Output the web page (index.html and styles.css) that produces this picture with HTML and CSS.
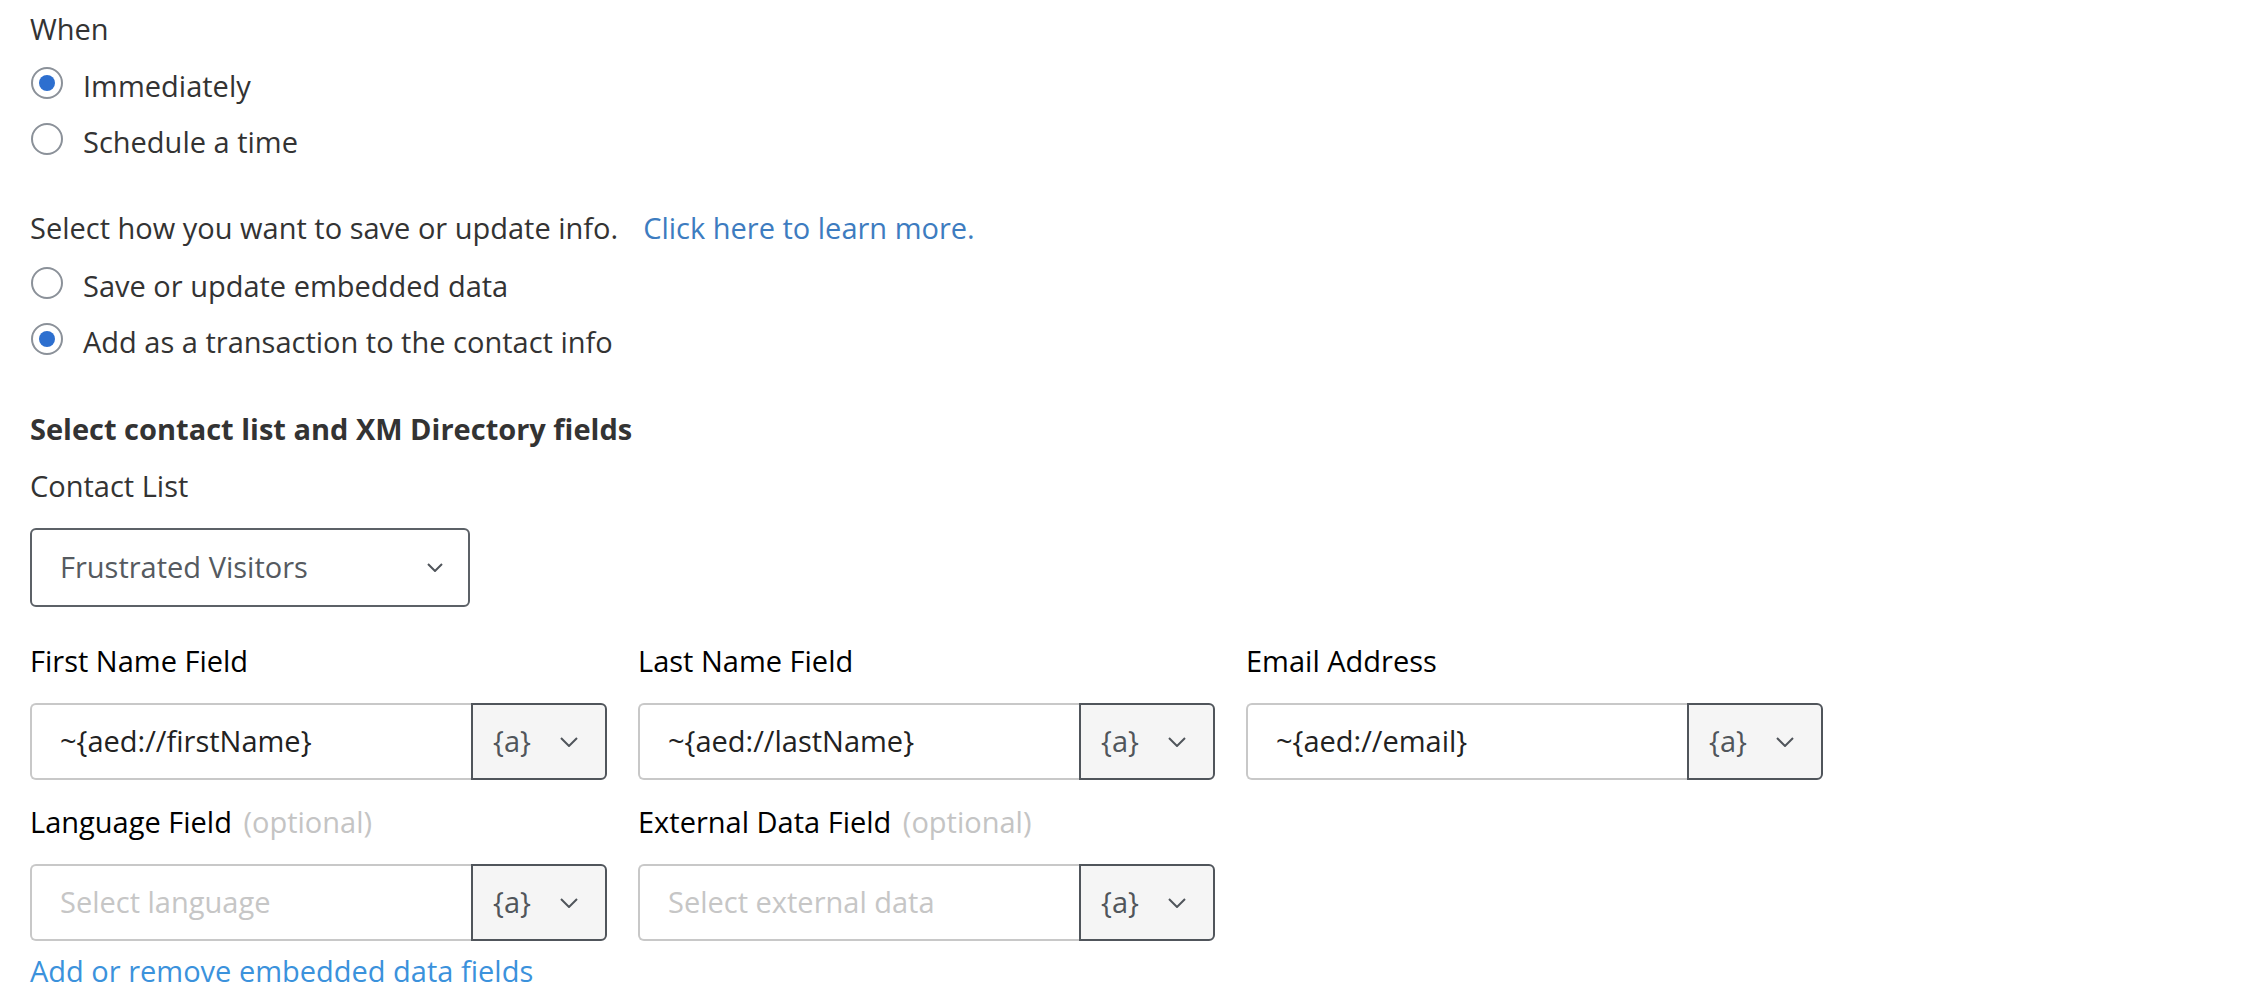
FILE: index.html
```html
<!DOCTYPE html>
<html lang="en">
<head>
  <meta charset="UTF-8">
  <meta name="viewport" content="width=device-width, initial-scale=1.0">
  <title>Save or Update Info</title>
  <link rel="stylesheet" href="styles.css">
</head>
<body>
  <div class="panel">
    <!-- When to run -->
    <div class="label">When</div>
    <div class="radio-group">
      <label class="radio-row"><span class="radio checked"></span>Immediately</label>
      <label class="radio-row"><span class="radio"></span>Schedule a time</label>
    </div>

    <!-- How to save -->
    <div class="label info">Select how you want to save or update info.<a href="#" class="learn-link">Click here to learn more.</a></div>
    <div class="radio-group">
      <label class="radio-row"><span class="radio"></span>Save or update embedded data</label>
      <label class="radio-row"><span class="radio checked"></span>Add as a transaction to the contact info</label>
    </div>

    <!-- Contact list -->
    <div class="label heading">Select contact list and XM Directory fields</div>
    <div class="label sub-label">Contact List</div>
    <div class="select">
      <span>Frustrated Visitors</span>
      <svg class="chevron small" viewBox="0 0 16 9"><polyline points="1,1 8,8 15,1"/></svg>
    </div>

    <!-- Field mapping -->
    <div class="fields">
      <div class="field">
        <div class="label">First Name Field</div>
        <div class="control">
          <div class="control-input">~{aed://firstName}</div>
          <div class="control-btn"><span>{a}</span><svg class="chevron" viewBox="0 0 18 10"><polyline points="1,1 9,9 17,1"/></svg></div>
        </div>
      </div>
      <div class="field">
        <div class="label">Last Name Field</div>
        <div class="control">
          <div class="control-input">~{aed://lastName}</div>
          <div class="control-btn"><span>{a}</span><svg class="chevron" viewBox="0 0 18 10"><polyline points="1,1 9,9 17,1"/></svg></div>
        </div>
      </div>
      <div class="field">
        <div class="label">Email Address</div>
        <div class="control">
          <div class="control-input">~{aed://email}</div>
          <div class="control-btn"><span>{a}</span><svg class="chevron" viewBox="0 0 18 10"><polyline points="1,1 9,9 17,1"/></svg></div>
        </div>
      </div>
      <div class="field">
        <div class="label">Language Field <span class="optional">(optional)</span></div>
        <div class="control">
          <div class="control-input placeholder">Select language</div>
          <div class="control-btn"><span>{a}</span><svg class="chevron" viewBox="0 0 18 10"><polyline points="1,1 9,9 17,1"/></svg></div>
        </div>
      </div>
      <div class="field">
        <div class="label">External Data Field <span class="optional">(optional)</span></div>
        <div class="control">
          <div class="control-input placeholder">Select external data</div>
          <div class="control-btn"><span>{a}</span><svg class="chevron" viewBox="0 0 18 10"><polyline points="1,1 9,9 17,1"/></svg></div>
        </div>
      </div>
    </div>

    <a href="#" class="label embed-link">Add or remove embedded data fields</a>
  </div>
</body>
</html>
```

FILE: styles.css
```css
* {
  margin: 0;
  padding: 0;
  box-sizing: border-box;
}

body {
  font-family: "Open Sans", "Liberation Sans", sans-serif;
  font-size: 29px;
  color: #333;
  background: #fff;
}

.panel {
  padding: 9px 30px 0;
}

.label {
  line-height: 40px;
}

/* Radio buttons */
.radio-group {
  margin-top: 8px;
}

.radio-row {
  display: flex;
  align-items: center;
  height: 56px;
}

.radio {
  width: 32px;
  height: 32px;
  margin: -4px 20px 0 1px;
  border: 2px solid #8b9199;
  border-radius: 50%;
  display: flex;
  align-items: center;
  justify-content: center;
  flex-shrink: 0;
}

.radio.checked::after {
  content: '';
  width: 16px;
  height: 16px;
  border-radius: 50%;
  background: #2d6fcf;
}

.info {
  margin-top: 39px;
}

.learn-link {
  margin-left: 25px;
  color: #3d7cc0;
  text-decoration: none;
}

.info + .radio-group {
  margin-top: 9px;
}

.heading {
  margin-top: 40px;
  font-weight: 700;
}

.sub-label {
  margin-top: 17px;
}

/* Contact list dropdown */
.select {
  margin-top: 22px;
  width: 440px;
  height: 79px;
  padding: 0 25px 3px 28px;
  border: 2px solid #5c6167;
  border-radius: 6px;
  display: flex;
  align-items: center;
  justify-content: space-between;
  color: #555a60;
}

.chevron {
  width: 18px;
  height: 10px;
  fill: none;
  stroke: #50555b;
  stroke-width: 2;
}

.chevron.small {
  width: 16px;
  height: 9px;
  margin-top: 3px;
}

/* Field grid */
.fields {
  margin-top: 34px;
  display: grid;
  grid-template-columns: repeat(3, 577px);
  column-gap: 31px;
  row-gap: 22px;
}

.field .label {
  color: #000;
}

.optional {
  margin-left: 4px;
  color: #c4c4c4;
}

.control {
  margin-top: 22px;
  height: 77px;
  display: flex;
}

.control-input {
  flex: 1;
  padding: 0 0 3px 28px;
  border: 2px solid #c8c8c8;
  border-right: none;
  border-radius: 6px 0 0 6px;
  display: flex;
  align-items: center;
  color: #222;
}

.control-input.placeholder {
  color: #c6c6c6;
}

.control-btn {
  width: 136px;
  padding: 0 27px 2px 20px;
  background: #f5f5f5;
  border: 2px solid #50555b;
  border-radius: 0 6px 6px 0;
  display: flex;
  align-items: center;
  justify-content: space-between;
  color: #50555b;
}

.control-btn .chevron {
  margin-top: 2px;
}

.embed-link {
  display: inline-block;
  margin-top: 10px;
  color: #3b92dc;
  text-decoration: none;
}
```
